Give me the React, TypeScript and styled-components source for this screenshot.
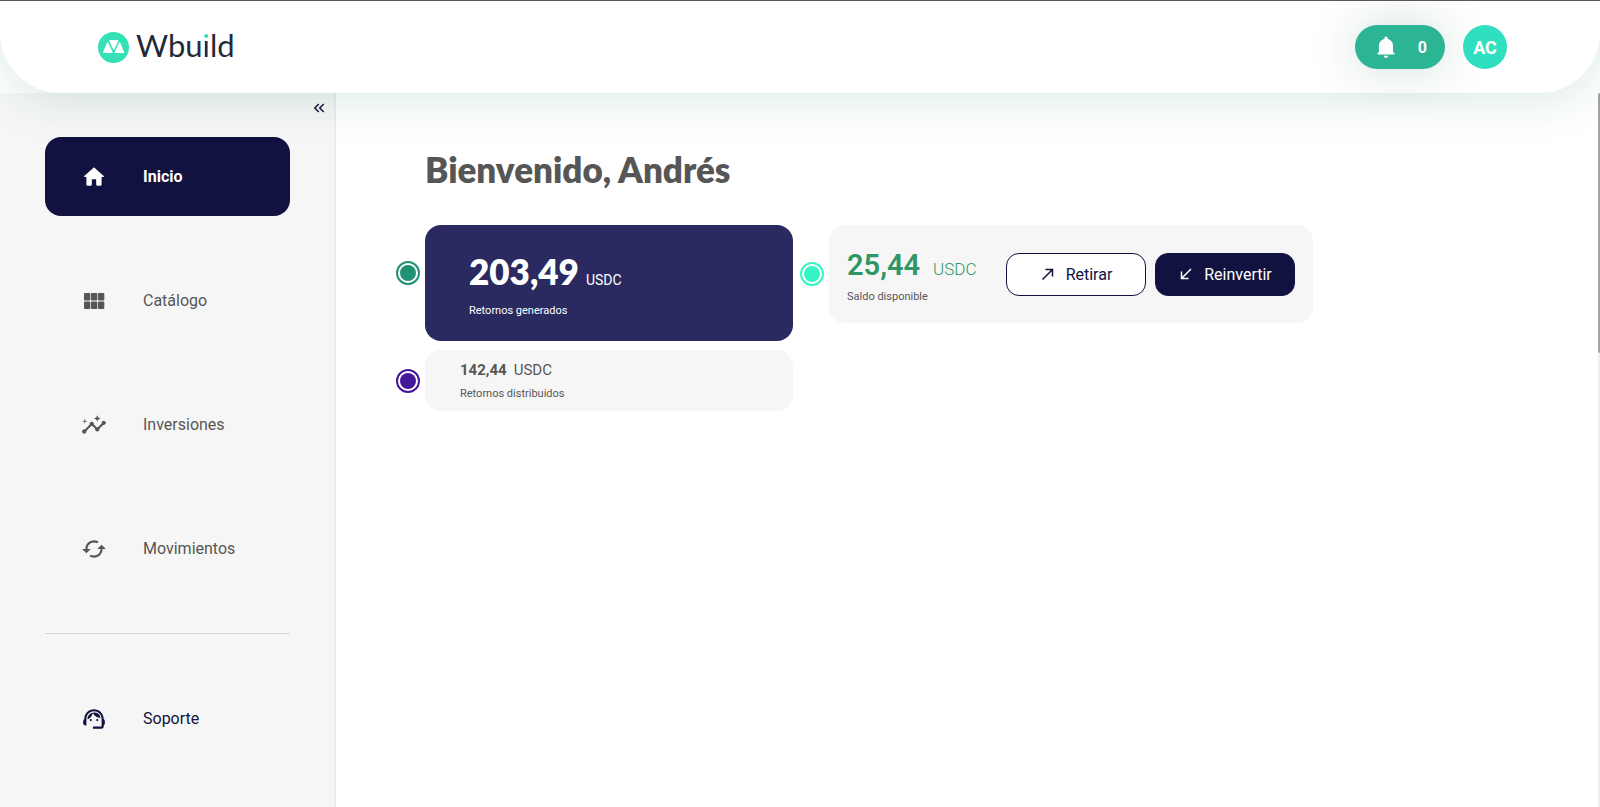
import React from "react";
import styled, { createGlobalStyle, css } from "styled-components";
import {
  MdCached,
  MdInsights,
  MdKeyboardDoubleArrowLeft,
  MdSupportAgent,
} from "react-icons/md";

const color = {
  navy: "#11123f",
  indigo: "#2a2960",
  grey: "#565656",
  panel: "#f6f6f6",
  green: "#2f9664",
  teal: "#2cb595",
  mint: "#2fdfc0",
};

const GlobalStyle = createGlobalStyle`
  * { box-sizing: border-box; }
  body {
    margin: 0;
    background: #ffffff;
    color: ${color.grey};
    font-family: Roboto, "Liberation Sans", sans-serif;
    font-size: 16px;
  }
  #root { display: grid; }
  h1, p { margin: 0; }
  button { font: inherit; cursor: pointer; }
`;

const Page = styled.div`
  display: flex;
  flex-direction: column;
  min-height: 100vh;
  overflow: hidden;
  border-top: 1px solid #58585a;
`;

const Header = styled.header`
  position: relative;
  z-index: 1;
  display: flex;
  align-items: center;
  justify-content: space-between;
  height: 92px;
  padding: 0 93px 0 98px;
  background: #ffffff;
  border-radius: 0 0 60px 60px;
  box-shadow: 0 4px 48px rgba(30, 120, 100, 0.18);
`;

const Brand = styled.a`
  display: flex;
  align-items: center;
  gap: 7px;
  color: #232a35;
  font-family: Lato, "Open Sans", sans-serif;
  font-size: 31px;
  line-height: 30px;
  text-decoration: none;
`;

const Wordmark = styled.span`
  padding-bottom: 4px;
`;

const DottedI = styled.span`
  background: linear-gradient(${color.mint} 0 14px, #232a35 14px);
  background-clip: text;
  color: transparent;
`;

const HeaderActions = styled.div`
  display: flex;
  align-items: center;
  gap: 18px;
`;

const Notifications = styled.button`
  display: flex;
  align-items: center;
  justify-content: space-between;
  width: 90px;
  height: 44px;
  padding: 0 18px;
  border: 0;
  border-radius: 22px;
  background: ${color.teal};
  box-shadow: 0 0 48px rgba(30, 110, 90, 0.22);
  color: #ffffff;
  font-weight: 700;
`;

const Avatar = styled.button`
  width: 44px;
  height: 44px;
  padding: 0;
  border: 0;
  border-radius: 50%;
  background: ${color.mint};
  color: #ffffff;
  font-size: 18px;
  font-weight: 700;
`;

const Body = styled.div`
  display: flex;
  flex: 1;
`;

const Sidebar = styled.aside`
  display: flex;
  flex-direction: column;
  flex: 0 0 336px;
  padding: 6px 44px 44px 45px;
  border-right: 2px solid #ececec;
  background: ${color.panel};
`;

const Collapse = styled.button`
  display: flex;
  align-self: flex-end;
  margin: 0 -38px 20px 0;
  padding: 0;
  border: 0;
  background: none;
  color: ${color.navy};
  font-size: 18px;
  line-height: 0;
`;

const Nav = styled.nav`
  display: flex;
  flex-direction: column;
  gap: 45px;
`;

const NavItem = styled.a<{ $tone?: "active" | "support" }>`
  display: flex;
  align-items: center;
  gap: 36px;
  height: 79px;
  padding: 0 36px;
  border-radius: 16px;
  color: ${color.grey};
  text-decoration: none;
  ${({ $tone }) => $tone === "active" && css`
    background: ${color.navy};
    color: #ffffff;
    font-weight: 700;
  `}
  ${({ $tone }) => $tone === "support" && css`
    color: ${color.navy};
  `}
  svg { width: 26px; height: 26px; flex: none; }
`;

const Divider = styled.hr`
  width: 100%;
  margin: 0;
  border: 0;
  border-top: 1px solid #d4d4d6;
`;

const Main = styled.main`
  flex: 1;
  padding: 54px 48px 48px 60px;
`;

const Title = styled.h1`
  margin-left: 29px;
  font-family: Lato, "Open Sans", sans-serif;
  font-size: 35px;
  font-weight: 800;
  line-height: 44px;
`;

const Summary = styled.div`
  display: flex;
  align-items: flex-start;
  gap: 7px;
  margin-top: 34px;
`;

const Column = styled.div`
  display: grid;
  gap: 9px;
`;

const Metric = styled.label<{ $raised?: boolean }>`
  display: flex;
  align-items: ${({ $raised }) => ($raised ? "flex-start" : "center")};
  gap: 5px;
  > input { margin-top: ${({ $raised }) => ($raised ? "36px" : "0")}; }
`;

const Marker = styled.input<{ $color: string }>`
  appearance: none;
  flex: none;
  width: 24px;
  height: 24px;
  margin: 0;
  border: 2px solid ${({ $color }) => $color};
  border-radius: 50%;
  background: ${({ $color }) => $color} content-box;
  padding: 2px;
`;

const Card = styled.div<{ $kind: "total" | "paid" | "balance" }>`
  display: flex;
  border-radius: 16px;
  background: ${color.panel};
  ${({ $kind }) => $kind === "total" && css`
    flex-direction: column;
    justify-content: center;
    gap: 6px;
    width: 368px;
    height: 116px;
    padding: 5px 44px 0;
    background: ${color.indigo};
    color: #ffffff;
  `}
  ${({ $kind }) => $kind === "paid" && css`
    flex-direction: column;
    justify-content: center;
    gap: 9px;
    width: 368px;
    height: 61px;
    padding: 2px 35px 0;
  `}
  ${({ $kind }) => $kind === "balance" && css`
    align-items: center;
    justify-content: space-between;
    width: 484px;
    height: 98px;
    padding: 0 18px;
  `}
`;

const Amount = styled.p<{ $kind: "total" | "paid" | "balance" }>`
  display: flex;
  align-items: baseline;
  gap: 7px;
  font-size: 15px;
  line-height: 16px;
  ${({ $kind }) => $kind === "total" && css`
    font-size: 14px;
    line-height: 36px;
    strong { font-family: Lato, "Open Sans", sans-serif; font-size: 35px; font-weight: 800; }
  `}
  ${({ $kind }) => $kind === "balance" && css`
    gap: 13px;
    color: ${color.green};
    font-size: 17px;
    font-weight: 300;
    line-height: 32px;
    strong { font-size: 29px; font-weight: 600; }
  `}
`;

const Caption = styled.p`
  font-size: 11px;
  line-height: 14px;
`;

const Balance = styled.div`
  display: grid;
  gap: 5px;
  padding-top: 5px;
`;

const Actions = styled.div`
  display: flex;
  gap: 9px;
`;

const Action = styled.button<{ $filled?: boolean }>`
  display: flex;
  align-items: center;
  justify-content: center;
  gap: 10px;
  width: 140px;
  height: 43px;
  padding: 0;
  border: 1px solid ${color.navy};
  border-radius: 13px;
  background: ${({ $filled }) => ($filled ? color.navy : "#ffffff")};
  color: ${({ $filled }) => ($filled ? "#ffffff" : color.navy)};
`;

const ScrollTrack = styled.div`
  flex: 0 0 2px;
  background: #e9eff3;
`;

const ScrollThumb = styled.div`
  height: 260px;
  border-radius: 2px 0 0 2px;
  background: #a3a3a3;
`;

const LogoMark = () => (
  <svg width="31" height="31" viewBox="0 0 31 31" aria-hidden="true">
    <circle cx="15.5" cy="15.5" r="15.5" fill="#35e0b5" />
    <g fill="#fff" stroke="#fff" strokeWidth="1" strokeLinejoin="round">
      <path d="M11.5 8.5h8.500L15.800 17.500z" />
      <path d="M9.500 10.500 5.500 20.500h8.800z" />
      <path d="M21.700 10.500 17 20.500h8.700z" />
    </g>
  </svg>
);

const HomeIcon = () => (
  <svg viewBox="0 0 24 24" fill="currentColor" aria-hidden="true">
    <path d="M10 19v-5h4v5c0 .55.45 1 1 1h3c.55 0 1-.45 1-1v-7h1.700c.46 0 .68-.57.33-.87L12.670 3.600c-.38-.34-.96-.34-1.340 0l-8.360 7.530c-.34.3-.13.87.33.87H5v7c0 .55.45 1 1 1h3c.55 0 1-.45 1-1z" />
  </svg>
);

const GridIcon = () => (
  <svg viewBox="0 0 26 26" fill="currentColor" aria-hidden="true">
    {[3, 10, 17].map((x) =>
      [5, 13.5].map((y) => <rect key={`${x}-${y}`} x={x} y={y} width="6.3" height="7.5" rx="1" />)
    )}
  </svg>
);

const BellIcon = () => (
  <svg width="26" height="26" viewBox="0 0 24 24" fill="currentColor" aria-hidden="true">
    <path d="M12 22c1.100 0 2-.9 2-2h-4c0 1.100.89 2 2 2zM5 19h14a1 1 0 0 0 0-2h-.5v-6c0-3.070-1.900-5.640-5-6.320V3.700c0-.83-.67-1.500-1.500-1.500s-1.500.67-1.500 1.500v.98C7.400 5.360 5.500 7.920 5.500 11v6H5a1 1 0 0 0 0 2z" />
  </svg>
);

const ArrowIcon = ({ inward = false }: { inward?: boolean }) => (
  <svg width="16" height="16" viewBox="0 0 16 16" fill="none" stroke="currentColor" strokeWidth="1.5" aria-hidden="true">
    <path d={inward ? "M13 3 3.500 12.500M3.500 5.500v7h7" : "M2.500 13.500 12.500 3.500M5.500 3.500h7v7"} />
  </svg>
);

export default function App() {
  return (
    <>
      <GlobalStyle />
      <Page>
        <Header>
          <Brand href="#">
            <LogoMark />
            <Wordmark>Wbu<DottedI>i</DottedI>ld</Wordmark>
          </Brand>
          <HeaderActions>
            <Notifications aria-label="Notificaciones">
              <BellIcon />
              <span>0</span>
            </Notifications>
            <Avatar>AC</Avatar>
          </HeaderActions>
        </Header>
        <Body>
          <Sidebar>
            <Collapse aria-label="Contraer menú">
              <MdKeyboardDoubleArrowLeft />
            </Collapse>
            <Nav>
              <NavItem href="#inicio" $tone="active"><HomeIcon />Inicio</NavItem>
              <NavItem href="#catalogo"><GridIcon />Catálogo</NavItem>
              <NavItem href="#inversiones"><MdInsights />Inversiones</NavItem>
              <NavItem href="#movimientos"><MdCached />Movimientos</NavItem>
              <Divider />
              <NavItem href="#soporte" $tone="support"><MdSupportAgent />Soporte</NavItem>
            </Nav>
          </Sidebar>
          <Main>
            <Title>Bienvenido, Andrés</Title>
            <Summary>
              <Column>
                <Metric $raised>
                  <Marker type="radio" name="generados" $color="#1f9273" />
                  <Card $kind="total">
                    <Amount $kind="total"><strong>203,49</strong>USDC</Amount>
                    <Caption>Retornos generados</Caption>
                  </Card>
                </Metric>
                <Metric>
                  <Marker type="radio" name="distribuidos" $color="#45179a" />
                  <Card $kind="paid">
                    <Amount $kind="paid"><strong>142,44</strong>USDC</Amount>
                    <Caption>Retornos distribuidos</Caption>
                  </Card>
                </Metric>
              </Column>
              <Metric as="div">
                <Marker type="radio" name="saldo" aria-label="Saldo disponible" $color="#36f5c4" />
                <Card $kind="balance">
                  <Balance>
                    <Amount $kind="balance"><strong>25,44</strong>USDC</Amount>
                    <Caption>Saldo disponible</Caption>
                  </Balance>
                  <Actions>
                    <Action><ArrowIcon />Retirar</Action>
                    <Action $filled><ArrowIcon inward />Reinvertir</Action>
                  </Actions>
                </Card>
              </Metric>
            </Summary>
          </Main>
          <ScrollTrack><ScrollThumb /></ScrollTrack>
        </Body>
      </Page>
    </>
  );
}
